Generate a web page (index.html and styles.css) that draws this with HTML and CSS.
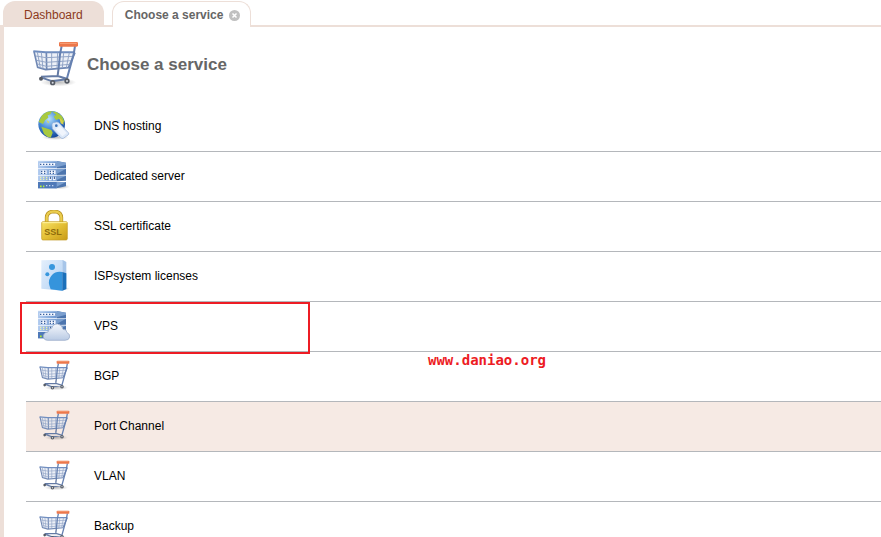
FILE: index.html
```html
<!DOCTYPE html>
<html lang="en">
<head>
    <meta charset="UTF-8">
    <meta name="viewport" content="width=device-width, initial-scale=1.0">
    <title>Choose a service</title>
    <link rel="stylesheet" href="styles.css">
</head>
<body>

<!-- Shared icons -->
<svg class="sprite" aria-hidden="true">
    <defs>
        <linearGradient id="blue-front" x1="0" x2="1">
            <stop offset="0" stop-color="#b4cdf0"/>
            <stop offset="1" stop-color="#6c96cf"/>
        </linearGradient>
        <linearGradient id="gold" x1="0" x2="1" y1="0" y2="1">
            <stop offset="0" stop-color="#f7e267"/>
            <stop offset="0.5" stop-color="#e3bf35"/>
            <stop offset="1" stop-color="#c99b17"/>
        </linearGradient>
        <radialGradient id="sea" cx="0.4" cy="0.3" r="0.7">
            <stop offset="0" stop-color="#b9e0fa"/>
            <stop offset="0.5" stop-color="#4b8fdb"/>
            <stop offset="1" stop-color="#164a9c"/>
        </radialGradient>
        <linearGradient id="cloud-fill" x1="0" x2="0" y1="0" y2="1">
            <stop offset="0" stop-color="#f4f7fc"/>
            <stop offset="1" stop-color="#b9cae4"/>
        </linearGradient>
        <linearGradient id="book-fill" x1="0" x2="1" y1="0" y2="1">
            <stop offset="0" stop-color="#e4effc"/>
            <stop offset="1" stop-color="#b3d2f4"/>
        </linearGradient>
        <radialGradient id="shade">
            <stop offset="0" stop-color="#555" stop-opacity="0.4"/>
            <stop offset="1" stop-color="#555" stop-opacity="0"/>
        </radialGradient>
        <clipPath id="globe-clip"><circle cx="65" cy="67" r="40"/></clipPath>
    </defs>

    <symbol id="icon-cart" viewBox="18 18 144 144">
        <ellipse cx="100" cy="142" rx="54" ry="12" fill="url(#shade)"/>
        <path d="M27 49 62 52 150 52 132 98 62 104 38 97Z" fill="#dfe6f2" fill-opacity="0.6"/>
        <path d="M27 49 38 97 62 104 130 98 150 53M64 52 65 103" fill="none" stroke="#7088b4" stroke-width="5"/>
        <path d="M25 49 62 52 150 52" fill="none" stroke="#6f8dbf" stroke-width="6"/>
        <path d="M37 51 46 99M49 52 54 101M80 53 80 101M98 53 96 100M116 53 112 99M133 53 124 98M32 63 63 68 145 64M35 76 64 82 140 77M38 87 64 94 135 88" fill="none" stroke="#92a5c7" stroke-width="3"/>
        <path d="M110 33 105 58 101 99M150 33 146 58 126 130" fill="none" stroke="#6681b1" stroke-width="6"/>
        <path d="M101 99 98 121M48 125 98 123 128 132M48 127 82 139 128 132" fill="none" stroke="#647ba5" stroke-width="6"/>
        <g fill="#555b65">
            <circle cx="48" cy="131" r="6"/>
            <circle cx="83" cy="143" r="8"/>
            <circle cx="126" cy="138" r="8"/>
        </g>
        <g fill="#d6d9df">
            <circle cx="83" cy="143" r="3"/>
            <circle cx="126" cy="138" r="3"/>
        </g>
        <rect x="102" y="21" width="57" height="14" rx="4" fill="#ec774b"/>
        <path d="M105 25h50" stroke="#f8a37c" stroke-width="3"/>
    </symbol>

    <symbol id="icon-globe" viewBox="24 24 96 96">
        <ellipse cx="76" cy="106" rx="40" ry="8" fill="url(#shade)"/>
        <circle cx="65" cy="67" r="40" fill="url(#sea)"/>
        <g clip-path="url(#globe-clip)" fill="#a8c93f">
            <path d="M36 40 50 29 66 27 61 37 53 40 55 47 45 55 39 66 26 60Z"/>
            <path d="M66 28 80 30 96 42 104 60 96 64 88 50 78 54 71 44 78 38Z"/>
            <path d="M34 74 46 78 64 84 68 92 62 108 52 104 42 96Z"/>
            <path d="M50 54 58 60 54 64Z" fill="#d8d956"/>
            <path d="M88 47 98 56 101 68 92 64Z" fill="#d9cf4a"/>
        </g>
        <path d="M66 69Q65 64 70 62L80 60Q85 60 88 64L115 92Q118 96 114 99L100 109Q96 111 92 107L67 80Z" fill="#dce8f8" stroke="#93add6" stroke-width="2"/>
        <path d="M90 72 110 93 97 103 77 82Z" fill="#f0f5fd"/>
        <circle cx="79" cy="71" r="4" fill="#3970b8"/>
    </symbol>

    <symbol id="icon-server" viewBox="24 24 96 96">
        <ellipse cx="90" cy="104" rx="30" ry="8" fill="url(#shade)"/>
        <path d="M24 27H80V48H24ZM24 50H80V69H24ZM24 71H80V88H24ZM24 90H80V109H24Z" fill="url(#blue-front)"/>
        <path d="M80 27 108 32V48H80ZM80 50H108V68L80 69ZM80 71H108V86L80 88ZM80 90H108V103L80 109Z" fill="#4d75ae"/>
        <path d="M80 27 108 32V38L80 46ZM80 50H108L80 66ZM80 71H108L80 84ZM80 90H108L80 104Z" fill="#7b9fcf"/>
        <path d="M24 27H80M24 50H80M24 71H80" stroke="#dbe8fa" stroke-width="2"/>
        <path d="M24 90H80V109H24Z" fill="#4f79b8"/>
        <path d="M29 33H76V41H29ZM32 55H50V67H32ZM57 55H77V67H57ZM57 74H65V85H57ZM69 74H77V85H69Z" fill="#f3f7ff"/>
        <path d="M30 37H76M33 58H50M33 64H50M59 58H77M59 64H77" stroke="#395f9a" stroke-width="4" stroke-dasharray="4 5"/>
        <path d="M61 74v7M73 74v7" stroke="#294a80" stroke-width="3"/>
        <path d="M30 76H52M30 82H52" stroke="#e9efb0" stroke-width="4" stroke-dasharray="4 5"/>
        <path d="M30 103H43" stroke="#b4ee35" stroke-width="5" stroke-dasharray="5 4"/>
        <path d="M48 101H72" stroke="#c3d5f0" stroke-width="4" stroke-dasharray="4 5"/>
    </symbol>

    <symbol id="icon-license" viewBox="24 24 96 96">
        <ellipse cx="92" cy="110" rx="28" ry="6" fill="url(#shade)"/>
        <path d="M34 25 97 23V116L34 110Z" fill="url(#book-fill)"/>
        <path d="M97 23 109 30V111L97 116Z" fill="#a6c5e9"/>
        <path d="M97 60Q78 56 66 69Q53 83 58 100L62 112 97 116Z" fill="#3594dc"/>
        <path d="M97 60 109 64V111L97 116Z" fill="#1b70ba"/>
        <circle cx="66" cy="45" r="9" fill="#3897dd"/>
        <circle cx="52" cy="67" r="6" fill="#3897dd"/>
    </symbol>

    <symbol id="icon-vps" viewBox="24 24 96 96">
        <use href="#icon-server" x="24" y="24" width="96" height="96"/>
        <path d="M52 115Q39 113 40 101Q42 90 54 90Q55 79 65 79Q69 65 83 66Q97 68 99 82Q110 81 111 92Q120 95 119 105Q117 115 105 115Z" fill="url(#cloud-fill)" stroke="#8fa3c3" stroke-width="2"/>
    </symbol>
</svg>

<nav class="tabs">
    <a class="tab" href="#dashboard">Dashboard</a>
    <div class="tab tab-active">
        <a href="#services">Choose a service</a>
        <button class="tab-close" type="button" aria-label="Close tab">
            <svg viewBox="0 0 11 11"><circle cx="5.5" cy="5.5" r="5.5" fill="#c0c0c0"/><path d="M3.5 3.5l4 4M7.5 3.5l-4 4" stroke="#fff" stroke-width="1.5"/></svg>
        </button>
    </div>
</nav>

<main class="panel">
    <header class="panel-header">
        <svg class="header-icon"><use href="#icon-cart"/></svg>
        <h1>Choose a service</h1>
    </header>

    <ul class="services">
        <li><a class="service" href="#dns"><svg class="icon"><use href="#icon-globe"/></svg>DNS hosting</a></li>
        <li><a class="service" href="#dedicated"><svg class="icon"><use href="#icon-server"/></svg>Dedicated server</a></li>
        <li>
            <a class="service" href="#ssl">
                <svg class="icon" viewBox="24 24 96 96">
                    <ellipse cx="80" cy="109" rx="38" ry="7" fill="url(#shade)"/>
                    <path d="M50 64V46Q51 29 72 28Q93 29 94 46V64" fill="none" stroke="#b58f20" stroke-width="11"/>
                    <path d="M50 64V46Q51 29 72 28Q93 29 94 46V64" fill="none" stroke="#ebcd4e" stroke-width="7"/>
                    <rect x="35" y="59" width="77" height="55" rx="4" fill="url(#gold)" stroke="#c39b23" stroke-width="2"/>
                    <path d="M37 62H110" stroke="#fff3a0" stroke-width="3"/>
                    <text class="lock-text" x="69" y="99" text-anchor="middle">SSL</text>
                </svg>
                SSL certificate
            </a>
        </li>
        <li><a class="service" href="#licenses"><svg class="icon"><use href="#icon-license"/></svg>ISPsystem licenses</a></li>
        <li class="marked">
            <a class="service" href="#vps"><svg class="icon"><use href="#icon-vps"/></svg>VPS</a>
            <span class="site-note">www.daniao.org</span>
        </li>
        <li><a class="service" href="#bgp"><svg class="icon"><use href="#icon-cart"/></svg>BGP</a></li>
        <li><a class="service service-hover" href="#port-channel"><svg class="icon"><use href="#icon-cart"/></svg>Port Channel</a></li>
        <li><a class="service" href="#vlan"><svg class="icon"><use href="#icon-cart"/></svg>VLAN</a></li>
        <li><a class="service" href="#backup"><svg class="icon"><use href="#icon-cart"/></svg>Backup</a></li>
    </ul>
</main>

</body>
</html>
```
FILE: styles.css
```css
* {
    box-sizing: border-box;
}
body {
    margin: 0;
    font-family: "Liberation Sans", Arial, sans-serif;
    font-size: 12px;
    color: #000;
    background-color: #fff;
}
a {
    color: inherit;
    text-decoration: none;
}
.sprite {
    position: absolute;
    width: 0;
    height: 0;
}
.lock-text {
    font-size: 27px;
    font-weight: bold;
    fill: #8f6c0c;
}

/* Tabs */
.tabs {
    display: flex;
    gap: 8px;
    padding: 1px 3px 0;
}
.tab {
    display: flex;
    align-items: center;
    height: 24px;
    padding: 4px 21px 1px;
    border-radius: 12px 12px 0 0;
    background-color: #eddfd8;
    color: #8b3a1c;
}
.tab-active {
    height: 26px;
    margin-bottom: -2px;
    padding: 1px 10px 0 12px;
    gap: 6px;
    border: 1px solid #eddfd8;
    border-bottom: 0;
    background-color: #fff;
    color: #666;
    font-weight: bold;
    z-index: 1;
}
.tab-close {
    width: 11px;
    height: 11px;
    padding: 0;
    border: 0;
    background: none;
}
.tab-close svg {
    display: block;
    width: 11px;
    height: 11px;
}

/* Content */
.panel {
    min-height: calc(100vh - 25px);
    border-top: 2px solid #eddfd8;
    border-left: 4px solid #eddfd8;
}
.panel-header {
    display: flex;
    align-items: center;
    gap: 8px;
    height: 75px;
    padding-left: 27px;
}
.header-icon {
    width: 48px;
    height: 48px;
}
h1 {
    margin: 0;
    font-size: 17px;
    color: #666;
}
.services {
    margin: 0 0 0 22px;
    padding: 0;
    list-style: none;
}
.service {
    display: flex;
    align-items: center;
    gap: 24px;
    height: 50px;
    padding: 0 0 2px 12px;
    border-bottom: 1px solid #b4b7bb;
}
.service-hover,
.service:hover {
    background-color: #f6eae4;
}
.icon {
    width: 32px;
    height: 32px;
}

/* Red frame around the chosen service */
.marked {
    position: relative;
}
.marked::after {
    content: "";
    position: absolute;
    box-sizing: border-box;
    top: 0;
    left: -6px;
    width: 290px;
    height: 52px;
    border: 2px solid #ed1c24;
    pointer-events: none;
}
.site-note {
    position: absolute;
    top: 50px;
    left: 402px;
    font-family: "DejaVu Sans Mono", monospace;
    font-size: 14px;
    font-weight: bold;
    line-height: 16px;
    color: #ed1c24;
}
```
